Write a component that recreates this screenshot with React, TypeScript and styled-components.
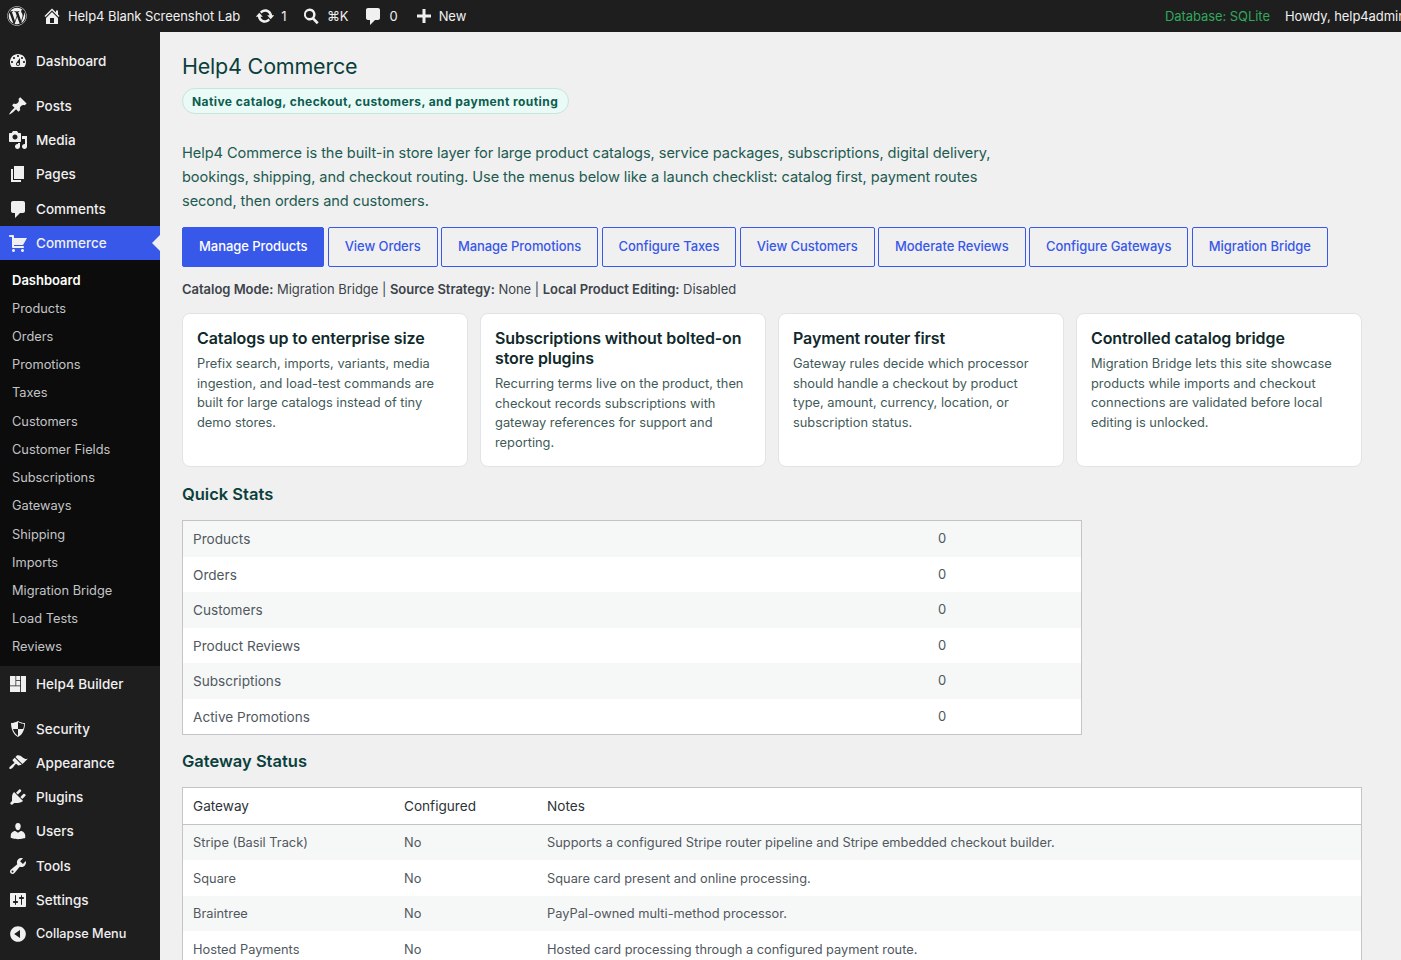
import React from "react";
import styled, { createGlobalStyle } from "styled-components";
import { FaWordpress } from "react-icons/fa";

const GlobalStyle = createGlobalStyle`
	html, body {
		margin: 0;
		padding: 0;
		height: 100%;
		overflow: hidden;
		background: #f0f0f0;
		font-family: Inter, "Noto Sans", "Liberation Sans", sans-serif;
		-webkit-font-smoothing: antialiased;
	}
	* { box-sizing: border-box; }
`;

const ICONS: Record<string, string> = {
	home: "M16 8.5l1.53 1.53-1.06 1.06L10 4.62l-6.47 6.47-1.06-1.06L10 2.5l4 4v-2h2v4zm-6-2.46l6 5.99V18H4v-5.97zM12 17v-5H8v5h4z",
	update: "M10.2 3.28c3.53 0 6.43 2.61 6.92 6h2.08l-3.5 4-3.5-4h2.32c-.45-1.97-2.21-3.45-4.32-3.45-1.45 0-2.73.71-3.54 1.78L4.95 5.66C6.23 4.2 8.11 3.28 10.2 3.28zm-.4 13.44c-3.52 0-6.43-2.61-6.92-6H.8l3.5-4c1.17 1.33 2.33 2.67 3.5 4H5.48c.45 1.97 2.21 3.45 4.32 3.45 1.45 0 2.73-.71 3.54-1.78l1.71 1.95c-1.28 1.46-3.15 2.38-5.25 2.38z",
	search: "M8.5 2.5a6 6 0 0 1 4.9 9.47l4.3 4.3-1.9 1.9-4.3-4.3A6 6 0 1 1 8.5 2.5zm0 2.4a3.6 3.6 0 1 0 0 7.2 3.6 3.6 0 0 0 0-7.2z",
	comment: "M5 2h10c1.1 0 2 .9 2 2v8c0 1.1-.9 2-2 2h-3l-5 5v-5H5c-1.1 0-2-.9-2-2V4c0-1.1.9-2 2-2z",
	plus: "M17 8.5v3h-5.5V17h-3v-5.5H3v-3h5.5V3h3v5.5H17z",
	dashboard: "M3.76 16h12.48c1.1-1.37 1.76-3.11 1.76-5 0-4.42-3.58-8-8-8s-8 3.58-8 8c0 1.89.66 3.63 1.76 5zM10 4c.55 0 1 .45 1 1s-.45 1-1 1-1-.45-1-1 .45-1 1-1zM6 6c.55 0 1 .45 1 1s-.45 1-1 1-1-.45-1-1 .45-1 1-1zm8 0c.55 0 1 .45 1 1s-.45 1-1 1-1-.45-1-1 .45-1 1-1zm-5.37 5.55L12 7v6c0 1.1-.9 2-2 2s-2-.9-2-2c0-.57.24-1.08.63-1.45zM4 10c.55 0 1 .45 1 1s-.45 1-1 1-1-.45-1-1 .45-1 1-1zm12 0c.55 0 1 .45 1 1s-.45 1-1 1-1-.45-1-1 .45-1 1-1zm-5 3c0-.55-.45-1-1-1s-1 .45-1 1 .45 1 1 1 1-.45 1-1z",
	pin: "M10.44 3.02l1.82-1.82 6.36 6.35-1.83 1.82c-1.05-.68-2.48-.57-3.41.36l-.75.75c-.92.93-1.04 2.35-.35 3.41l-1.83 1.82-2.41-2.41-2.8 2.79c-.42.42-3.38 2.71-3.8 2.29s1.86-3.39 2.28-3.81l2.79-2.79L4.1 9.36l1.83-1.82c1.05.69 2.48.57 3.4-.36l.75-.75c.93-.92 1.05-2.35.36-3.41z",
	media: "M13 11V4c0-.55-.45-1-1-1h-1.67L9 1H5L3.67 3H2c-.55 0-1 .45-1 1v7c0 .55.45 1 1 1h10c.55 0 1-.45 1-1zM7 4.5c1.38 0 2.5 1.12 2.5 2.5S8.38 9.5 7 9.5 4.5 8.38 4.5 7 5.62 4.5 7 4.5zM14 6h5v10.5c0 1.38-1.12 2.5-2.5 2.5S14 17.88 14 16.5s1.12-2.5 2.5-2.5c.17 0 .34.02.5.05V9h-3V6zm-4 8.05V13h2v3.5c0 1.38-1.12 2.5-2.5 2.5S7 17.88 7 16.5 8.12 14 9.5 14c.17 0 .34.02.5.05z",
	page: "M6 15V2h10v13H6zm-1 1h8v2H3V5h2v11z",
	cart: "M6 13h9c.55 0 1 .45 1 1s-.45 1-1 1H5c-.55 0-1-.45-1-1V4H2c-.55 0-1-.45-1-1s.45-1 1-1h3c.55 0 1 .45 1 1v2h13l-4 7H6v1zm-.5 3c.83 0 1.5.67 1.5 1.5S6.33 19 5.5 19 4 18.33 4 17.5 4.67 16 5.5 16zm9 0c.83 0 1.5.67 1.5 1.5s-.67 1.5-1.5 1.5-1.5-.67-1.5-1.5.67-1.5 1.5-1.5z",
	builder: "M2 2h5.5v9.5H2V2zm6.2 0h4v4h-4V2zm0 4.8h4v4.7h-4V6.8zM2 12.3h10.2V18H2v-5.7zM13 2h5v16h-5V2z",
	shield: "M10 2s3 2 7 2c0 11-7 14-7 14S3 15 3 4c4 0 7-2 7-2zm0 8h5s1-1 1-5c0 0-5-1-6-2v7H5c1 4 5 7 5 7v-7z",
	brush: "M14.48 11.06L7.41 3.99l1.5-1.5c.5-.56 2.3-.47 3.51.32 1.21.8 1.43 1.28 2.91 2.1 1.18.64 2.45 1.26 4.45.85zm-.71.71L6.7 4.7 4.93 6.47c-.39.39-.39 1.02 0 1.41l1.06 1.06c.39.39.39 1.03 0 1.42-.6.6-1.43 1.11-2.21 1.69-.35.26-.7.53-1.01.84C1.43 13.71.96 15.12 1.54 15.7c.58.58 2 .11 3.34-1.23.31-.31.58-.66.84-1.01.58-.78 1.09-1.61 1.69-2.21.39-.39 1.03-.39 1.42 0l1.06 1.06c.39.39 1.02.39 1.41 0z",
	plug: "M13.11 4.36L9.87 7.6 8 5.73l3.24-3.24c.35-.34 1.05-.2 1.56.32.52.51.66 1.21.31 1.55zm-8 1.77l.91-1.12 9.01 9.01-1.19.84c-.71.71-2.63 1.16-3.82 1.16H6.14L4.9 17.26c-.59.59-1.54.59-2.12 0-.59-.58-.59-1.53 0-2.12l1.24-1.24v-3.88c0-1.13.4-3.19 1.09-3.89zm7.26 3.97l3.24-3.24c.34-.35 1.04-.21 1.55.31.52.51.66 1.21.31 1.55l-3.24 3.25z",
	users: "M10 9.25c-2.27 0-2.73-3.44-2.73-3.44C7 4.02 7.82 2 9.97 2c2.16 0 2.98 2.02 2.71 3.81 0 0-.41 3.44-2.68 3.44zm0 2.57L12.72 10c2.39 0 4.52 2.33 4.52 4.53v2.49s-3.65 1.13-7.24 1.13c-3.65 0-7.24-1.13-7.24-1.13v-2.49c0-2.25 1.94-4.48 4.47-4.48z",
	tools: "M16.68 9.77c-1.34 1.34-3.3 1.67-4.95.99l-5.41 6.52c-.99.99-2.59.99-3.58 0s-.99-2.59 0-3.57l6.52-5.42c-.68-1.65-.35-3.61.99-4.95 1.28-1.28 3.12-1.62 4.72-1.06l-2.89 2.89 2.82 2.82 2.86-2.87c.53 1.58.18 3.39-1.08 4.65zM3.81 16.21c.4.39 1.04.39 1.43 0 .4-.4.4-1.04 0-1.43-.39-.4-1.03-.4-1.43 0-.39.39-.39 1.03 0 1.43z",
	settings: "M18 16V4c0-.55-.45-1-1-1H3c-.55 0-1 .45-1 1v12c0 .55.45 1 1 1h14c.55 0 1-.45 1-1zM8 11h1c.55 0 1 .45 1 1s-.45 1-1 1H8v1.5c0 .28-.22.5-.5.5s-.5-.22-.5-.5V13H6c-.55 0-1-.45-1-1s.45-1 1-1h1V5.5c0-.28.22-.5.5-.5s.5.22.5.5V11zm5-2h-1c-.55 0-1-.45-1-1s.45-1 1-1h1V5.5c0-.28.22-.5.5-.5s.5.22.5.5V7h1c.55 0 1 .45 1 1s-.45 1-1 1h-1v5.5c0 .28-.22.5-.5.5s-.5-.22-.5-.5V9z",
	collapse: "M10 2.16c4.33 0 7.84 3.51 7.84 7.84s-3.51 7.84-7.84 7.84S2.16 14.33 2.16 10 5.71 2.16 10 2.16zm2 11.72V6.12L6.18 9.97z",
};

const Icon = ({ name }: { name: string }) => (
	<svg viewBox="0 0 20 20" width="20" height="20" fill="currentColor" aria-hidden="true">
		<path fillRule="evenodd" d={ICONS[name]} />
	</svg>
);

const AdminBar = styled.header`
	display: flex;
	align-items: center;
	height: 32px;
	background: #1e1e1e;
	color: #f0f0f1;
	font-size: 13px;
	letter-spacing: -0.07px;
	overflow: hidden;
	white-space: nowrap;
`;

const BarLeft = styled.div`
	flex: 0 0 1165px;
	display: flex;
	align-items: center;
`;

const BarLogo = styled.span`
	display: flex;
	width: 20px;
	margin: 0 15px 0 7px;
	font-size: 20px;
`;

const BarItem = styled.span<{ $gap: number; $after: number }>`
	display: flex;
	align-items: center;
	gap: ${({ $gap }) => $gap}px;
	margin-right: ${({ $after }) => $after}px;
	svg { width: 20px; height: 20px; flex: none; }
`;

const BarDatabase = styled.span`
	flex: none;
	color: #30a85c;
	margin-right: 15px;
`;

const BarUser = styled.span`
	flex: none;
`;

const Shell = styled.div`
	display: flex;
	height: 928px;
	overflow: hidden;
`;

const Sidebar = styled.nav`
	flex: 0 0 160px;
	background: #1e1e1e;
	padding-top: 11.8px;
`;

const MenuItem = styled.div<{ $current?: boolean; $gapAfter?: boolean; $small?: boolean }>`
	position: relative;
	display: flex;
	align-items: center;
	height: 34.2px;
	padding-left: 8px;
	gap: 8px;
	font-size: ${({ $small }) => ($small ? "12.7px" : "13.5px")};
	font-weight: 450;
	color: #f0f0f1;
	background: ${({ $current }) => ($current ? "#3858e9" : "transparent")};
	margin-bottom: ${({ $gapAfter }) => ($gapAfter ? "11px" : "0")};
	svg { flex: none; }
`;

const CurrentArrow = styled.span`
	position: absolute;
	right: 0;
	top: 50%;
	margin-top: -8px;
	border: 8px solid transparent;
	border-right-color: #f0f0f0;
	border-left-width: 0;
`;

const SubMenu = styled.div`
	background: #0c0c0c;
	padding: 6px 0 5.5px;
`;

const SubItem = styled.div<{ $current?: boolean }>`
	display: flex;
	align-items: center;
	height: 28.22px;
	padding-left: 12px;
	font-size: ${({ $current }) => ($current ? "13px" : "12.8px")};
	font-weight: ${({ $current }) => ($current ? 600 : 400)};
	color: ${({ $current }) => ($current ? "#ffffff" : "#c3c4c7")};
`;

const Main = styled.main`
	flex: 1;
	min-width: 0;
	padding: 0 39px 0 22px;
`;

const Title = styled.h1`
	margin: 20px 0 0;
	font-size: 21.5px;
	line-height: 29px;
	font-weight: 400;
	letter-spacing: -0.2px;
	color: #0b3f3c;
`;

const Pill = styled.div`
	display: inline-flex;
	align-items: center;
	height: 26px;
	margin-top: 7px;
	padding: 0 10px 0 9px;
	border: 1px solid #c5e5de;
	border-radius: 13px;
	background: #eafaf6;
	color: #0b5d50;
	font-size: 12px;
	font-weight: 700;
	letter-spacing: 0.42px;
`;

const Intro = styled.p`
	margin: 27px 0 0;
	max-width: 820px;
	font-size: 14.6px;
	line-height: 24px;
	letter-spacing: -0.07px;
	color: #1d5a50;
`;

const ButtonRow = styled.div`
	display: flex;
	gap: 3.3px;
	margin-top: 14px;
`;

const ActionButton = styled.a<{ $primary?: boolean }>`
	display: flex;
	align-items: center;
	height: 40px;
	padding: 0 16px 2px;
	border: 1px solid #3858e9;
	border-radius: 2px;
	background: ${({ $primary }) => ($primary ? "#3858e9" : "transparent")};
	color: ${({ $primary }) => ($primary ? "#ffffff" : "#3858e9")};
	font-size: 13px;
	font-weight: 500;
	letter-spacing: -0.06px;
	white-space: nowrap;
`;

const MetaLine = styled.p`
	margin: 14px 0 0;
	font-size: 13px;
	line-height: 17px;
	letter-spacing: -0.03px;
	color: #3c434a;
	strong { font-weight: 600; }
`;

const CardGrid = styled.div`
	display: grid;
	grid-template-columns: repeat(4, 286px);
	gap: 12px;
	margin-top: 15px;
`;

const Card = styled.article`
	height: 154px;
	padding: 14px;
	background: #ffffff;
	border: 1px solid #e1e3e6;
	border-radius: 8px;
`;

const CardTitle = styled.h3`
	margin: 0 0 6px;
	font-size: 16px;
	line-height: 20px;
	font-weight: 600;
	letter-spacing: -0.1px;
	color: #10292b;
`;

const CardText = styled.p`
	margin: 0;
	font-size: 12.85px;
	line-height: 19.6px;
	color: #3f5a58;
`;

const SectionTitle = styled.h2<{ $top: number }>`
	margin: ${({ $top }) => $top}px 0 15px;
	font-size: 16.5px;
	line-height: 22px;
	font-weight: 600;
	color: #0b3f3c;
`;

const Table = styled.table<{ $width: number }>`
	width: ${({ $width }) => $width}px;
	border-collapse: separate;
	border-spacing: 0;
	border: 1px solid #c3c4c7;
	background: #ffffff;
	table-layout: fixed;
	color: #50575e;
`;

const HeadCell = styled.th`
	height: 36.5px;
	padding: 0 10px;
	border-bottom: 1px solid #c3c4c7;
	text-align: left;
	font-size: 13.6px;
	font-weight: 400;
	color: #2c3338;
`;

const Row = styled.tr<{ $striped: boolean }>`
	background: ${({ $striped }) => ($striped ? "#f6f7f7" : "#ffffff")};
`;

const Cell = styled.td<{ $size: number }>`
	height: 35.5px;
	padding: 1px 10px 0;
	font-size: ${({ $size }) => $size}px;
`;

const StatValue = styled.td`
	height: 35.5px;
	padding: 0 10px 1px;
	font-size: 13px;
`;

const NAV_TOP = [
	{ icon: "dashboard", label: "Dashboard", gapAfter: true },
	{ icon: "pin", label: "Posts" },
	{ icon: "media", label: "Media" },
	{ icon: "page", label: "Pages" },
	{ icon: "comment", label: "Comments" },
];

const SUB_ITEMS = [
	"Products",
	"Orders",
	"Promotions",
	"Taxes",
	"Customers",
	"Customer Fields",
	"Subscriptions",
	"Gateways",
	"Shipping",
	"Imports",
	"Migration Bridge",
	"Load Tests",
	"Reviews",
];

const NAV_BOTTOM = [
	{ icon: "shield", label: "Security" },
	{ icon: "brush", label: "Appearance" },
	{ icon: "plug", label: "Plugins" },
	{ icon: "users", label: "Users" },
	{ icon: "tools", label: "Tools" },
	{ icon: "settings", label: "Settings" },
];

const BUTTONS = [
	"Manage Products",
	"View Orders",
	"Manage Promotions",
	"Configure Taxes",
	"View Customers",
	"Moderate Reviews",
	"Configure Gateways",
	"Migration Bridge",
];

const CARDS = [
	{
		title: "Catalogs up to enterprise size",
		text: "Prefix search, imports, variants, media ingestion, and load-test commands are built for large catalogs instead of tiny demo stores.",
	},
	{
		title: "Subscriptions without bolted-on store plugins",
		text: "Recurring terms live on the product, then checkout records subscriptions with gateway references for support and reporting.",
	},
	{
		title: "Payment router first",
		text: "Gateway rules decide which processor should handle a checkout by product type, amount, currency, location, or subscription status.",
	},
	{
		title: "Controlled catalog bridge",
		text: "Migration Bridge lets this site showcase products while imports and checkout connections are validated before local editing is unlocked.",
	},
];

const STATS = ["Products", "Orders", "Customers", "Product Reviews", "Subscriptions", "Active Promotions"];

const GATEWAYS = [
	["Stripe (Basil Track)", "No", "Supports a configured Stripe router pipeline and Stripe embedded checkout builder."],
	["Square", "No", "Square card present and online processing."],
	["Braintree", "No", "PayPal-owned multi-method processor."],
	["Hosted Payments", "No", "Hosted card processing through a configured payment route."],
];

export default function App() {
	return (
		<>
			<GlobalStyle />
			<AdminBar>
				<BarLeft>
					<BarLogo>
						<FaWordpress />
					</BarLogo>
					<BarItem $gap={6} $after={15}>
						<Icon name="home" />
						Help4 Blank Screenshot Lab
					</BarItem>
					<BarItem $gap={6} $after={14.5}>
						<Icon name="update" />1
					</BarItem>
					<BarItem $gap={6} $after={14}>
						<Icon name="search" />⌘K
					</BarItem>
					<BarItem $gap={7} $after={16}>
						<Icon name="comment" />0
					</BarItem>
					<BarItem $gap={5} $after={0}>
						<Icon name="plus" />
						New
					</BarItem>
				</BarLeft>
				<BarDatabase>Database: SQLite</BarDatabase>
				<BarUser>Howdy, help4admin</BarUser>
			</AdminBar>
			<Shell>
				<Sidebar>
					{NAV_TOP.map((item) => (
						<MenuItem key={item.label} $gapAfter={item.gapAfter}>
							<Icon name={item.icon} />
							{item.label}
						</MenuItem>
					))}
					<MenuItem $current>
						<Icon name="cart" />
						Commerce
						<CurrentArrow />
					</MenuItem>
					<SubMenu>
						<SubItem $current>Dashboard</SubItem>
						{SUB_ITEMS.map((label) => (
							<SubItem key={label}>{label}</SubItem>
						))}
					</SubMenu>
					<MenuItem $gapAfter>
						<Icon name="builder" />
						Help4 Builder
					</MenuItem>
					{NAV_BOTTOM.map((item) => (
						<MenuItem key={item.label}>
							<Icon name={item.icon} />
							{item.label}
						</MenuItem>
					))}
					<MenuItem $small>
						<Icon name="collapse" />
						Collapse Menu
					</MenuItem>
				</Sidebar>
				<Main>
					<Title>Help4 Commerce</Title>
					<Pill>Native catalog, checkout, customers, and payment routing</Pill>
					<Intro>
						Help4 Commerce is the built-in store layer for large product catalogs, service packages, subscriptions,
						digital delivery, bookings, shipping, and checkout routing. Use the menus below like a launch checklist:
						catalog first, payment routes second, then orders and customers.
					</Intro>
					<ButtonRow>
						{BUTTONS.map((label, i) => (
							<ActionButton key={label} $primary={i === 0}>
								{label}
							</ActionButton>
						))}
					</ButtonRow>
					<MetaLine>
						<strong>Catalog Mode:</strong> Migration Bridge | <strong>Source Strategy:</strong> None |{" "}
						<strong>Local Product Editing:</strong> Disabled
					</MetaLine>
					<CardGrid>
						{CARDS.map((card) => (
							<Card key={card.title}>
								<CardTitle>{card.title}</CardTitle>
								<CardText>{card.text}</CardText>
							</Card>
						))}
					</CardGrid>
					<SectionTitle $top={16}>Quick Stats</SectionTitle>
					<Table $width={900}>
						<colgroup>
							<col width="745" />
							<col />
						</colgroup>
						<tbody>
							{STATS.map((label, i) => (
								<Row key={label} $striped={i % 2 === 0}>
									<Cell $size={13.6}>{label}</Cell>
									<StatValue>0</StatValue>
								</Row>
							))}
						</tbody>
					</Table>
					<SectionTitle $top={15}>Gateway Status</SectionTitle>
					<Table $width={1180}>
						<colgroup>
							<col width="211" />
							<col width="143" />
							<col />
						</colgroup>
						<thead>
							<tr>
								<HeadCell>Gateway</HeadCell>
								<HeadCell>Configured</HeadCell>
								<HeadCell>Notes</HeadCell>
							</tr>
						</thead>
						<tbody>
							{GATEWAYS.map((row, i) => (
								<Row key={row[0]} $striped={i % 2 === 0}>
									{row.map((value) => (
										<Cell key={value} $size={12.82}>
											{value}
										</Cell>
									))}
								</Row>
							))}
						</tbody>
					</Table>
				</Main>
			</Shell>
		</>
	);
}
